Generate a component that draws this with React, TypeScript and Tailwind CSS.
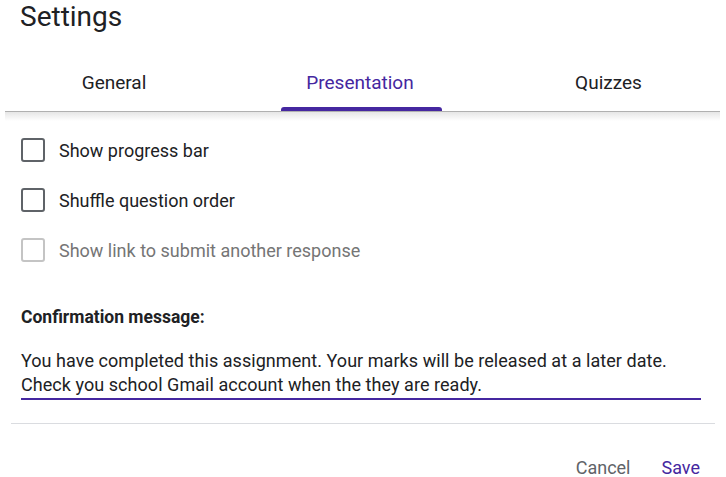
import React from "react";

const purple = "text-[#4527a0]";

function Check({ label, disabled }: { label: string; disabled?: boolean }) {
  return (
    <div className="flex items-center h-[50px]">
      <div
        className={
          "w-[24px] h-[24px] rounded-[3px] border-2 ml-[21px] " +
          (disabled ? "border-[#c4c4c4]" : "border-[#5f6368]")
        }
      />
      <span
        className={
          "ml-[14px] text-[18px] " + (disabled ? "text-[#757575]" : "text-[#202124]")
        }
      >
        {label}
      </span>
    </div>
  );
}

export default function App() {
  return (
    <div
      className="w-[726px] h-[477px] bg-white overflow-hidden relative"
      style={{ fontFamily: "Roboto, 'Liberation Sans', sans-serif" }}
    >
      <div className="pl-[20px] pt-[0px] text-[28px] leading-[34px] text-[#202124]">Settings</div>
      <div className="mt-[31px] ml-[5px] w-[715px] relative">
        <div className="flex h-[46px] text-[19px]">
          <div className="w-[218px] flex justify-center pt-[4px] text-[#202124]">General</div>
          <div className="w-[274px] flex flex-col items-center pt-[4px]">
            <span className={purple}>Presentation</span>
          </div>
          <div className="flex-1 flex justify-center pt-[4px] text-[#202124]">Quizzes</div>
        </div>
        <div className="absolute left-[276px] top-[42px] w-[161px] h-[4px] bg-[#4527a0] rounded-t-[3px]" />
        <div className="h-[1px] bg-[#b0b0b0]" />
        <div className="h-[9px] bg-gradient-to-b from-[#e6e6e6] to-white" />
      </div>
      <div className="mt-[4px]">
        <Check label="Show progress bar" />
        <Check label="Shuffle question order" />
        <Check label="Show link to submit another response" disabled />
      </div>
      <div className="ml-[21px] mt-[30px] text-[17.5px] leading-[25px] font-bold text-[#202124]">Confirmation message:</div>
      <div className="ml-[21px] mr-[25px] mt-[19px] text-[18px] tracking-[0.05px] leading-[24px] text-[#202124] pb-[1px] border-b-2 border-[#4527a0]">
        You have completed this assignment. Your marks will be released at a later date.
        <br />
        Check you school Gmail account when the they are ready.
      </div>
      <div className="mx-[11px] mt-[23px] h-[1px] bg-[#dadce0]" />
      <div className="flex justify-end items-center pr-[26px] mt-[30px] text-[18px] gap-[31px]">
        <span className="text-[#5f6368]">Cancel</span>
        <span className={purple}>Save</span>
      </div>
    </div>
  );
}
